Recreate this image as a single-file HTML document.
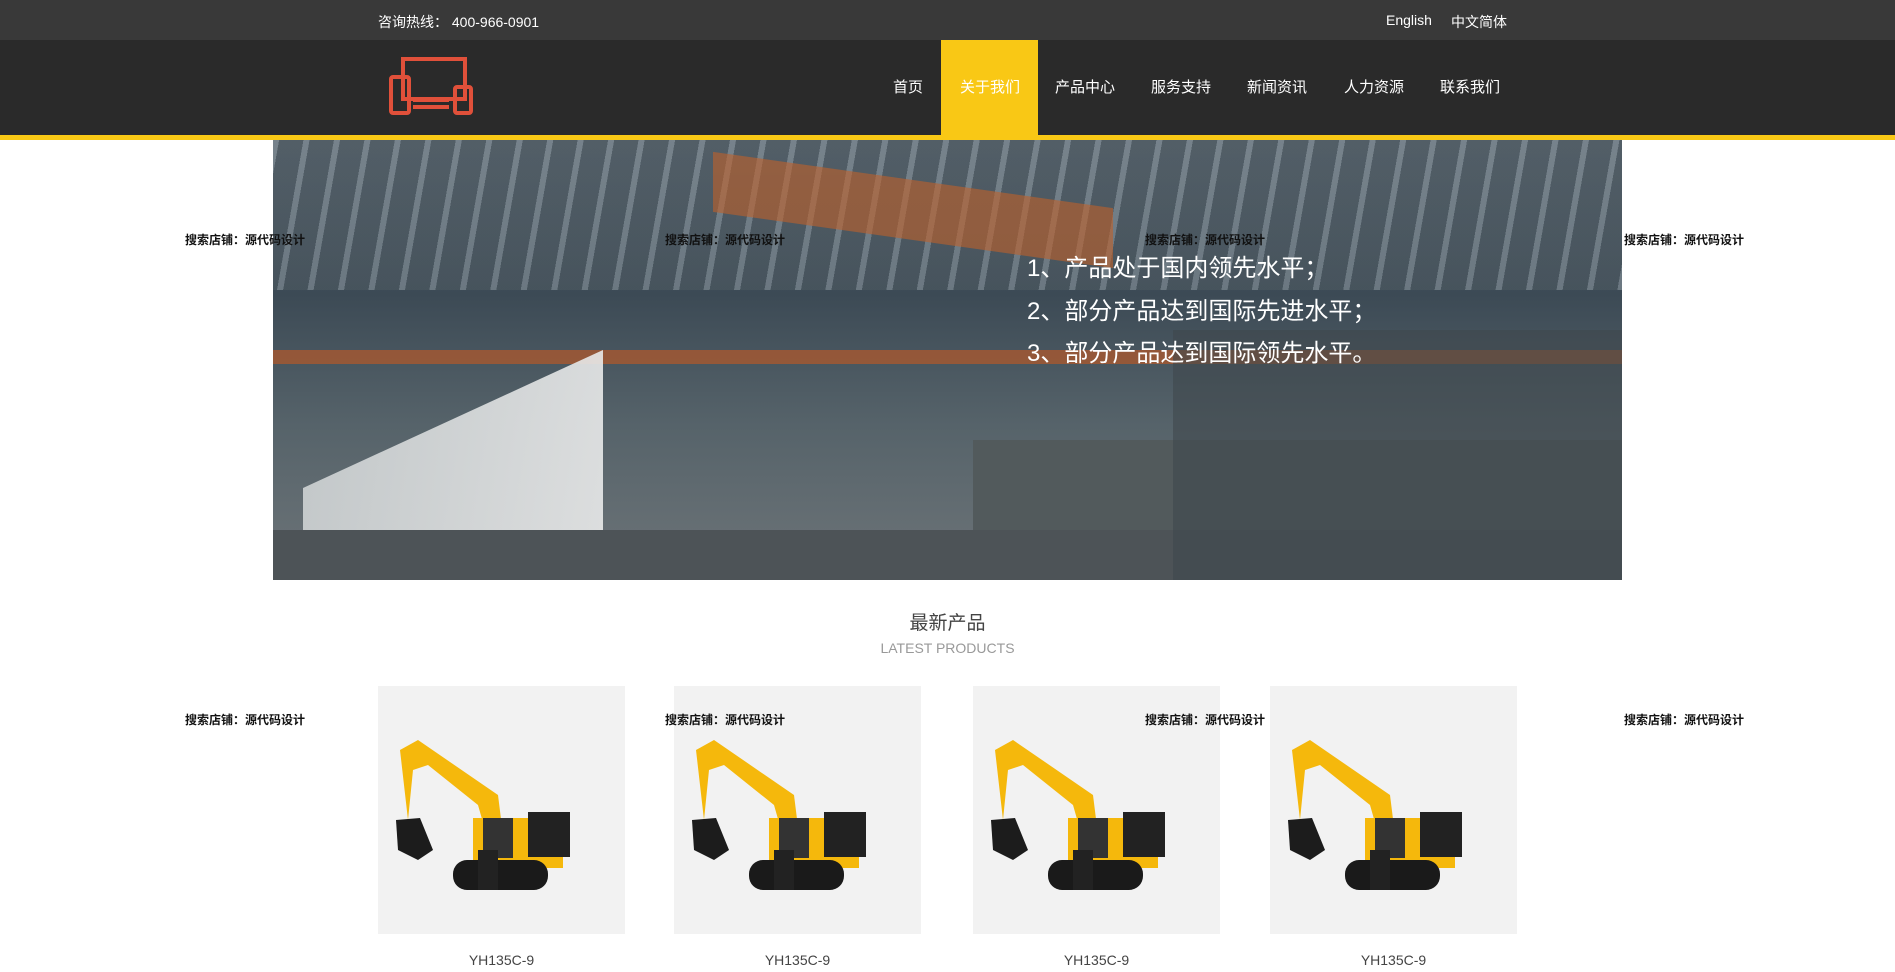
<!DOCTYPE html>
<html><head><meta charset="utf-8"><style>
*{margin:0;padding:0;box-sizing:border-box}
body{width:1895px;height:972px;overflow:hidden;background:#fff;font-family:"Liberation Sans","Noto Sans CJK SC",sans-serif;position:relative}
.top{position:absolute;left:0;top:0;width:1895px;height:40px;background:#393939;color:#fff;font-size:14px}
.nav{position:absolute;left:0;top:40px;width:1895px;height:95px;background:#2a2a2a}
.yl{position:absolute;left:0;top:135px;width:1895px;height:5px;background:#f9c815}
.ni{position:absolute;top:40px;height:95px;line-height:95px;color:#fff;font-size:15px;transform:translateX(-50%)}
.banner{position:absolute;left:273px;top:140px;width:1349px;height:440px;overflow:hidden;background:linear-gradient(180deg,#5a6670 0%,#3c4a55 35%,#56636a 65%,#6d7478 100%)}
.bt{position:absolute;left:754px;color:#fff;font-size:24px;white-space:nowrap}
.wm{position:absolute;font-size:12px;color:#111;font-weight:bold;white-space:nowrap}
.card{position:absolute;top:686px;width:247px;height:248px;background:#f2f2f2}
.cap{position:absolute;top:952px;width:247px;text-align:center;font-size:14px;color:#444}
</style></head><body>
<div class="top"><span style="position:absolute;left:378px;top:12px">咨询热线：&nbsp;400-966-0901</span><span style="position:absolute;left:1386px;top:12px">English</span><span style="position:absolute;left:1451px;top:12px">中文简体</span></div>
<div class="nav"></div>
<svg style="position:absolute;left:389px;top:57px" width="86" height="58" viewBox="0 0 86 58"><g fill="none" stroke="#e0503a" stroke-width="4"><rect x="14" y="2" width="62" height="40"/><rect x="2" y="20" width="18" height="36" rx="2"/><rect x="66" y="30" width="16" height="26" rx="2"/></g><rect x="24" y="40" width="36" height="5" fill="#e0503a"/><rect x="24" y="48" width="36" height="4" fill="#e0503a"/></svg>
<div style="position:absolute;left:941px;top:40px;width:97px;height:95px;background:#f9c815"></div>
<div class="ni" style="left:908px">首页</div><div class="ni" style="left:990px">关于我们</div><div class="ni" style="left:1085px">产品中心</div><div class="ni" style="left:1181px">服务支持</div><div class="ni" style="left:1277px">新闻资讯</div><div class="ni" style="left:1374px">人力资源</div><div class="ni" style="left:1470px">联系我们</div>
<div class="yl"></div>
<div class="banner">
<div style="position:absolute;left:0;top:0;width:100%;height:150px;background:repeating-linear-gradient(100deg,#8a969e 0 6px,#4d5961 6px 30px);opacity:.6"></div>
<div style="position:absolute;left:0;top:210px;width:100%;height:14px;background:#b5582a;opacity:.7"></div>
<div style="position:absolute;left:440px;top:40px;width:400px;height:60px;background:#c0602a;opacity:.6;transform:skewY(8deg)"></div>
<div style="position:absolute;left:30px;top:210px;width:300px;height:230px;background:linear-gradient(90deg,#cfd3d4,#e9eaea);opacity:.9;clip-path:polygon(0 60%,100% 0,100% 100%,0 100%)"></div>
<div style="position:absolute;left:700px;top:300px;width:649px;height:140px;background:#525a5c"></div>
<div style="position:absolute;left:0;top:390px;width:100%;height:50px;background:#4d5357"></div>
<div style="position:absolute;left:900px;top:190px;width:450px;height:250px;background:#40484c;opacity:.6"></div>
<div class="bt" style="top:108px">1、产品处于国内领先水平；</div>
<div class="bt" style="top:151px">2、部分产品达到国际先进水平；</div>
<div class="bt" style="top:193px">3、部分产品达到国际领先水平。</div>
</div>
<div style="position:absolute;left:0;top:608px;width:1895px;text-align:center;font-size:19px;color:#444">最新产品</div>
<div style="position:absolute;left:0;top:640px;width:1895px;text-align:center;font-size:14px;color:#999">LATEST PRODUCTS</div>
<div class="card" style="left:378px"></div><div class="card" style="left:674px"></div><div class="card" style="left:973px"></div><div class="card" style="left:1270px"></div>
<svg width="0" height="0" style="position:absolute"><defs><g id="ex"><path d="M22 50 L40 40 L120 95 L125 135 L110 140 L100 105 L50 65 L35 70 L30 120 Z" fill="#f5b80c"/><path d="M18 120 L42 118 L55 150 L40 160 L20 150 Z" fill="#1c1c1c"/><rect x="95" y="118" width="90" height="50" fill="#f5b80c"/><rect x="150" y="112" width="42" height="45" fill="#222"/><rect x="105" y="118" width="30" height="40" fill="#333"/><rect x="75" y="160" width="95" height="30" rx="14" fill="#1a1a1a"/><rect x="100" y="150" width="20" height="40" fill="#222"/></g></defs></svg>
<svg style="position:absolute;left:378px;top:700px" width="247" height="220"><use href="#ex"/></svg>
<svg style="position:absolute;left:674px;top:700px" width="247" height="220"><use href="#ex"/></svg>
<svg style="position:absolute;left:973px;top:700px" width="247" height="220"><use href="#ex"/></svg>
<svg style="position:absolute;left:1270px;top:700px" width="247" height="220"><use href="#ex"/></svg>
<div class="cap" style="left:378px">YH135C-9</div><div class="cap" style="left:674px">YH135C-9</div><div class="cap" style="left:973px">YH135C-9</div><div class="cap" style="left:1270px">YH135C-9</div>
<div class="wm" style="left:185px;top:231px">搜索店铺：源代码设计</div><div class="wm" style="left:665px;top:231px">搜索店铺：源代码设计</div><div class="wm" style="left:1145px;top:231px">搜索店铺：源代码设计</div><div class="wm" style="left:1624px;top:231px">搜索店铺：源代码设计</div>
<div class="wm" style="left:185px;top:711px">搜索店铺：源代码设计</div><div class="wm" style="left:665px;top:711px">搜索店铺：源代码设计</div><div class="wm" style="left:1145px;top:711px">搜索店铺：源代码设计</div><div class="wm" style="left:1624px;top:711px">搜索店铺：源代码设计</div>
</body></html>
